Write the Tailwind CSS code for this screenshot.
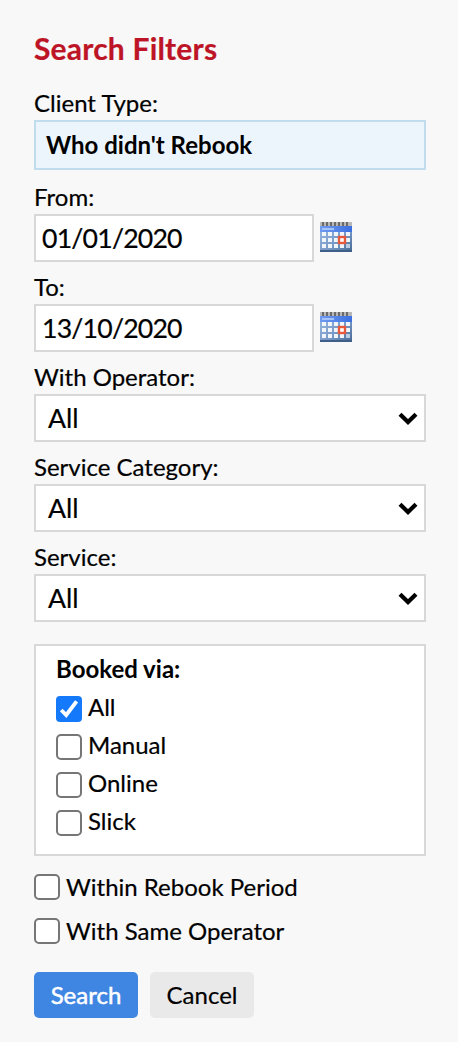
<!DOCTYPE html>
<html lang="en">
<head>
    <meta charset="UTF-8">
    <meta name="viewport" content="width=device-width, initial-scale=1.0">
    <title>Search Filters</title>
    <script src="https://cdn.jsdelivr.net/npm/@tailwindcss/browser@4"></script>
</head>
<body class="bg-[#f8f8f8] font-['Lato',sans-serif] text-[24px] leading-[30px] text-black [-webkit-text-stroke:0.2px]">

    <!-- Shared icons -->
    <svg class="absolute size-0">
        <defs>
            <linearGradient id="cal-body" x1="0" y1="0" x2="1" y2="1">
                <stop offset="0" stop-color="#9dbce4"/>
                <stop offset="0.6" stop-color="#7698c4"/>
                <stop offset="1" stop-color="#456892"/>
            </linearGradient>
            <linearGradient id="cal-head" x1="0" y1="0" x2="1" y2="0">
                <stop offset="0" stop-color="#6f9bf0"/>
                <stop offset="1" stop-color="#3b6fe0"/>
            </linearGradient>
        </defs>
        <symbol id="icon-calendar" viewBox="0 0 32 30">
            <rect y="2" width="32" height="28" fill="url(#cal-body)"/>
            <path d="M0 29h32" stroke="#3f5f88" stroke-width="2"/>
            <rect y="4" width="32" height="6" fill="url(#cal-head)"/>
            <rect x="2" y="6" width="12" height="2" fill="#a5c2fa"/>
            <rect width="32" height="4" fill="#b8b8b8"/>
            <path d="M2 2h28" stroke="#6b6b6b" stroke-width="4" stroke-dasharray="2 2"/>
            <g fill="#f1f6fd">
                <path d="M2 10h4v4H2zM8 10h4v4H8zM14 10h4v4h-4zM20 10h4v4h-4zM26 10h4v4h-4z"/>
                <path d="M2 16h4v4H2zM8 16h4v4H8zM14 16h4v4h-4zM26 16h4v4h-4z"/>
                <path d="M2 22h4v4H2zM8 22h4v4H8zM14 22h4v4h-4zM20 22h4v4h-4z"/>
            </g>
            <path d="M26 22h4v4h-4z" fill="#b9cce3"/>
            <rect x="19" y="15" width="6" height="6" fill="#fff" stroke="#e8593c" stroke-width="2.4"/>
        </symbol>
        <symbol id="icon-chevron" viewBox="0 0 20 13">
            <path d="M2 2.2l8 7.8 8-7.8" fill="none" stroke="#000" stroke-width="4.2"/>
        </symbol>
    </svg>

    <form class="px-[34px] pt-[30px]">
        <h1 class="mb-[22px] text-[30px] leading-[36px] font-bold tracking-[0.2px] text-[#bd1526]">Search Filters</h1>

        <div>
            <label class="mb-0.5 block">Client Type:</label>
            <div class="flex h-[50px] w-[392px] items-center border-2 border-[#c1dcec] bg-[#edf5fc] px-[10px] font-bold [-webkit-text-stroke:0]">Who didn't Rebook</div>
        </div>

        <div class="mt-3">
            <label class="mb-0.5 block">From:</label>
            <div class="flex items-center gap-1.5">
                <div class="flex h-12 w-[280px] items-center border-2 border-[#d8d8d8] bg-white px-1.5 text-[26.67px] tracking-[-0.8px]">01/01/2020</div>
                <svg class="mb-0.5 h-[30px] w-8"><use href="#icon-calendar"/></svg>
            </div>
        </div>

        <div class="mt-2.5">
            <label class="mb-0.5 block">To:</label>
            <div class="flex items-center gap-1.5">
                <div class="flex h-12 w-[280px] items-center border-2 border-[#d8d8d8] bg-white px-1.5 text-[26.67px] tracking-[-0.8px]">13/10/2020</div>
                <svg class="mb-0.5 h-[30px] w-8"><use href="#icon-calendar"/></svg>
            </div>
        </div>

        <div class="mt-2.5">
            <label class="mb-0.5 block">With Operator:</label>
            <div class="flex h-12 w-[392px] items-center justify-between border-2 border-[#d8d8d8] bg-white pr-1.5 pl-3 text-[26.67px]">
                All
                <svg class="h-[13px] w-5"><use href="#icon-chevron"/></svg>
            </div>
        </div>

        <div class="mt-2.5">
            <label class="mb-0.5 block">Service Category:</label>
            <div class="flex h-12 w-[392px] items-center justify-between border-2 border-[#d8d8d8] bg-white pr-1.5 pl-3 text-[26.67px]">
                All
                <svg class="h-[13px] w-5"><use href="#icon-chevron"/></svg>
            </div>
        </div>

        <div class="mt-2.5">
            <label class="mb-0.5 block">Service:</label>
            <div class="flex h-12 w-[392px] items-center justify-between border-2 border-[#d8d8d8] bg-white pr-1.5 pl-3 text-[26.67px]">
                All
                <svg class="h-[13px] w-5"><use href="#icon-chevron"/></svg>
            </div>
        </div>

        <fieldset class="mt-[22px] h-[212px] w-[392px] border-2 border-[#d8d8d8] bg-white px-5 pt-2">
            <div class="mb-2 font-bold [-webkit-text-stroke:0]">Booked via:</div>
            <div class="flex flex-col gap-2">
                <label class="flex h-[30px] gap-1.5">
                    <span class="mt-1 size-[26px] rounded-[4px] bg-[#1479fb]">
                        <svg class="size-[26px]" viewBox="0 0 26 26"><path d="M5.2 14l5 5L20.6 5.4" fill="none" stroke="#fff" stroke-width="3.8"/></svg>
                    </span>
                    All
                </label>
                <label class="flex h-[30px] gap-1.5">
                    <span class="mt-1 size-[26px] rounded-[5px] border-2 border-[#767676] bg-white"></span>
                    Manual
                </label>
                <label class="flex h-[30px] gap-1.5">
                    <span class="mt-1 size-[26px] rounded-[5px] border-2 border-[#767676] bg-white"></span>
                    Online
                </label>
                <label class="flex h-[30px] gap-1.5">
                    <span class="mt-1 size-[26px] rounded-[5px] border-2 border-[#767676] bg-white"></span>
                    Slick
                </label>
            </div>
        </fieldset>

        <label class="mt-4 flex h-[30px] gap-1.5">
            <span class="mt-0.5 size-[26px] rounded-[5px] border-2 border-[#767676] bg-white"></span>
            Within Rebook Period
        </label>
        <label class="mt-3.5 flex h-[30px] gap-1.5">
            <span class="mt-0.5 size-[26px] rounded-[5px] border-2 border-[#767676] bg-white"></span>
            With Same Operator
        </label>

        <div class="mt-[26px] flex gap-3">
            <button type="button" class="h-[46px] w-[104px] rounded-[5px] bg-[#3f86e3] text-white [-webkit-text-stroke:0.5px]">Search</button>
            <button type="button" class="h-[46px] w-[104px] rounded-[5px] bg-[#e9e9e9]">Cancel</button>
        </div>
    </form>

</body>
</html>
